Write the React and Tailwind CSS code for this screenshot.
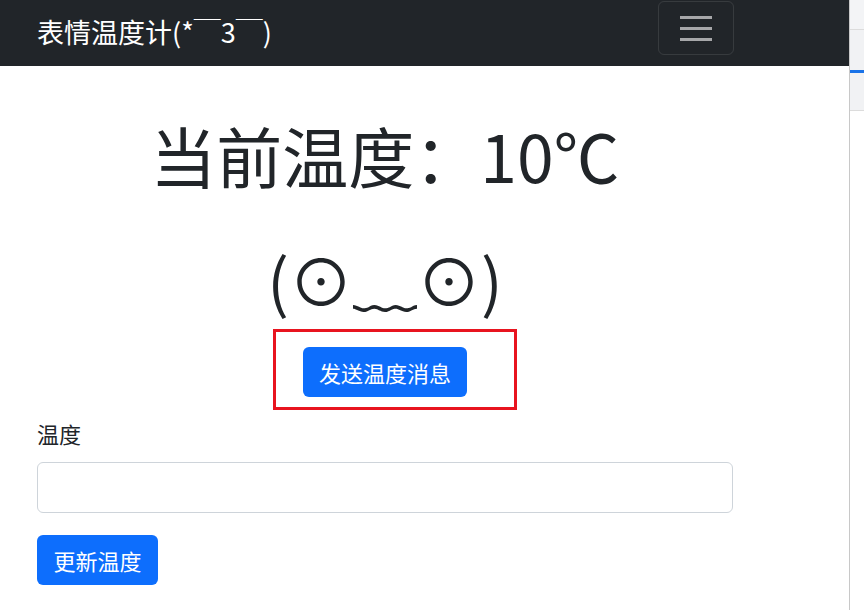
import React from 'react';

const font = { fontFamily: '"Microsoft YaHei", "Noto Sans CJK SC", "Noto Sans", sans-serif' };

const App = () => {
  return (
    <div className="flex h-[610px] w-[864px] overflow-hidden bg-white text-[#212529]" style={font}>
      {/* Page */}
      <div className="w-[849px] shrink-0">
        {/* Navbar */}
        <nav className="flex h-[66px] items-start justify-between bg-[#212529] pl-[37px] pr-[115px]">
          <a className="mt-[12px] text-[27px] leading-[40px] text-white">表情温度计(*￣3￣)</a>
          <button className="mt-[1px] flex h-[54px] w-[76px] flex-col items-center justify-center gap-[8px] rounded-[6px] border border-white/10">
            <span className="h-[3px] w-[32px] bg-[#a6a7a9]" />
            <span className="h-[3px] w-[32px] bg-[#a6a7a9]" />
            <span className="h-[3px] w-[32px] bg-[#a6a7a9]" />
          </button>
        </nav>

        {/* Content */}
        <div className="ml-[37px] w-[696px]">
          <h1 className="mt-[49px] text-center text-[66px] font-normal leading-[79px]">当前温度：10℃</h1>
          <div className="mt-[46px] text-center text-[64px] leading-[77px]">(⊙﹏⊙)</div>

          <div className="mt-[30px] flex justify-center">
            <div className="relative">
              <button className="h-[50px] w-[164px] rounded-[6px] bg-[#0d6efd] text-[22px] text-white">
                发送温度消息
              </button>
              {/* annotation box */}
              <div className="pointer-events-none absolute left-[-30px] top-[-18px] h-[81px] w-[244px] border-[3px] border-[#e8141f]" />
            </div>
          </div>

          <label className="mt-[20px] block text-[22px] leading-[33px]">温度</label>
          <input className="mt-[12px] block h-[51px] w-full rounded-[6px] border border-[#ced4da] px-3 text-[22px] outline-none" />
          <button className="mt-[22px] h-[50px] w-[121px] rounded-[6px] bg-[#0d6efd] text-[22px] text-white">
            更新温度
          </button>
        </div>
      </div>

      {/* Side strip */}
      <div className="flex w-[15px] shrink-0 flex-col border-l border-[#c8c8c8]">
        <div className="h-[30px] border-b border-[#dcdcdc] bg-[#f3f4f6]" />
        <div className="h-[40px] bg-[#f1f2f4]" />
        <div className="h-[3px] bg-[#1a73e8]" />
        <div className="h-[38px] border-b border-[#dcdcdc] bg-[#f1f2f4]" />
        <div className="flex-1 bg-white" />
      </div>
    </div>
  );
};

export default App;
